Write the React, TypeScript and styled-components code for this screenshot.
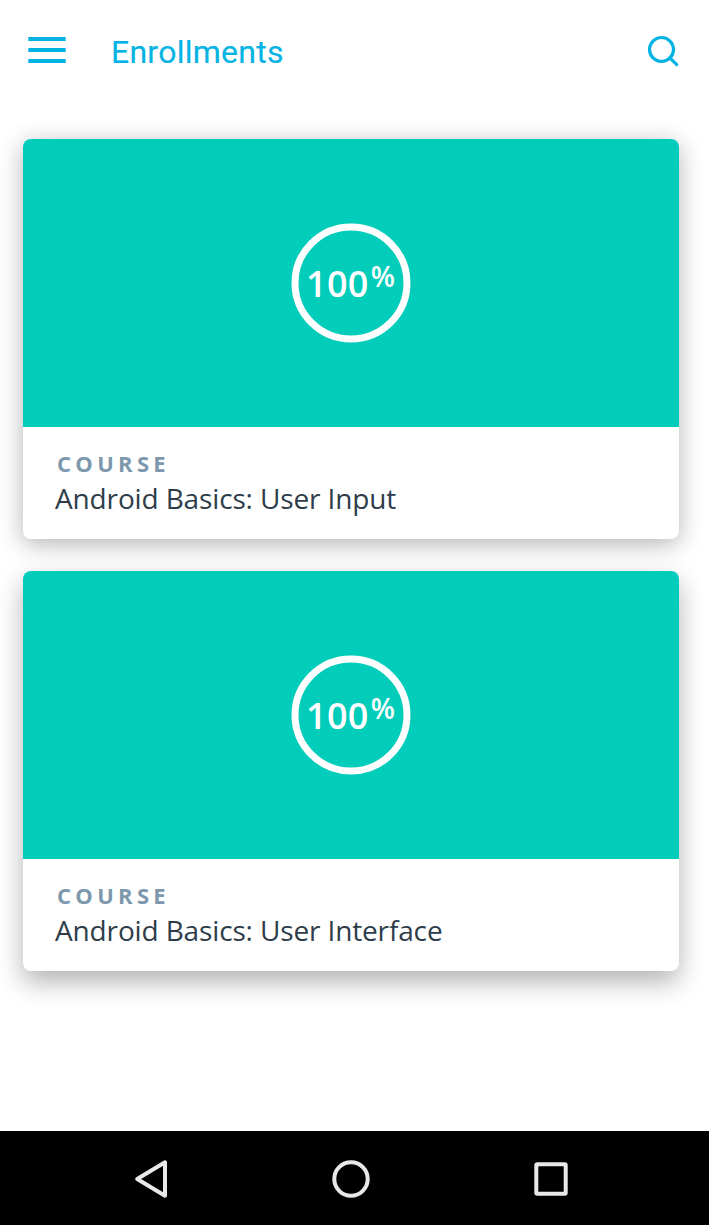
import React from 'react';
import styled, { createGlobalStyle } from 'styled-components';

const GlobalStyle = createGlobalStyle`
  * { box-sizing: border-box; }
  body { margin: 0; background: #fff; }
`;

const Screen = styled.div`
  width: 100%;
  height: 1225px;
  display: flex;
  flex-direction: column;
  overflow: hidden;
  font-family: 'Open Sans', sans-serif;
`;

const AppBar = styled.header`
  height: 104px;
  flex: none;
  display: flex;
  align-items: center;
  padding: 0 28px;
`;

const MenuIcon = styled.svg`
  width: 38px;
  height: 28px;
  margin-bottom: 4px;
`;

const Title = styled.h1`
  flex: 1;
  margin: 0 0 0 45px;
  font: 400 32px/40px Roboto, sans-serif;
  letter-spacing: 0.25px;
  color: #02b3e4;
  -webkit-text-stroke: 0.15px #02b3e4;
`;

const SearchIcon = styled.svg`
  width: 34px;
  height: 34px;
  margin-bottom: 2px;
`;

const CourseList = styled.main`
  flex: 1;
  display: flex;
  flex-direction: column;
  gap: 32px;
  padding: 35px 30px 0 23px;
`;

const Card = styled.article<{ $raised?: boolean }>`
  height: 400px;
  border-radius: 8px;
  overflow: hidden;
  background: #fff;
  box-shadow: ${({ $raised }) =>
    $raised
      ? '0 11px 26px rgba(0, 0, 0, 0.3)'
      : '0 5px 24px rgba(0, 0, 0, 0.3)'};
`;

const Banner = styled.div`
  height: 288px;
  display: flex;
  align-items: center;
  justify-content: center;
  background: #02ccba;
`;

const Progress = styled.div`
  display: grid;
  place-items: center;
  color: #fff;

  > * {
    grid-area: 1 / 1;
  }
`;

const Ring = styled.svg`
  width: 120px;
  height: 120px;
  fill: none;
  stroke: currentColor;
  stroke-width: 7;
`;

const Score = styled.div`
  display: flex;
  align-items: center;
`;

const Amount = styled.span`
  font: 600 36px/50px 'Open Sans', sans-serif;
  letter-spacing: 0.3px;
  margin: 2px 0 0 -1px;
`;

const Percent = styled.span`
  font: 600 28px/38px 'Open Sans', sans-serif;
  margin: -14px 0 0 2px;
`;

const Details = styled.div`
  padding: 21px 32px 0;
`;

const Kind = styled.div`
  padding-left: 2px;
  font: 700 22px/30px 'Open Sans', sans-serif;
  letter-spacing: 4.3px;
  color: #7d97ad;
`;

const CourseName = styled.h2`
  margin: 0;
  font: 400 28px/40px 'Open Sans', sans-serif;
  letter-spacing: -0.14px;
  color: #2e3d49;
`;

const NavBar = styled.nav`
  height: 94px;
  flex: none;
  display: flex;
  align-items: center;
  justify-content: center;
  gap: 160px;
  padding: 2px 7px 0 0;
  background: #000;
`;

const NavIcon = styled.svg`
  width: 40px;
  height: 40px;
  fill: none;
  stroke: #e9e9e9;
  stroke-width: 4;
  stroke-linejoin: round;
`;

const courses = ['Android Basics: User Input', 'Android Basics: User Interface'];

export default function App() {
  return (
    <Screen>
      <GlobalStyle />
      <AppBar>
        <MenuIcon viewBox="0 0 38 28" fill="#02b3e4">
          <path d="M.3 1h37.4v4H.3zM.3 12h37.4v4H.3zM.3 23h37.4v4H.3z" />
        </MenuIcon>
        <Title>Enrollments</Title>
        <SearchIcon viewBox="0 0 34 34" fill="none" stroke="#02b3e4" strokeWidth="3.2">
          <circle cx="14.5" cy="15.5" r="12" />
          <path d="m22.7 23.7 7 7" strokeLinecap="round" />
        </SearchIcon>
      </AppBar>
      <CourseList>
        {courses.map((name, index) => (
          <Card key={name} $raised={index === courses.length - 1}>
            <Banner>
              <Progress>
                <Ring viewBox="0 0 120 120">
                  <circle cx="60" cy="60" r="56" />
                </Ring>
                <Score>
                  <Amount>100</Amount>
                  <Percent>%</Percent>
                </Score>
              </Progress>
            </Banner>
            <Details>
              <Kind>COURSE</Kind>
              <CourseName>{name}</CourseName>
            </Details>
          </Card>
        ))}
      </CourseList>
      <NavBar>
        <NavIcon viewBox="0 0 40 40">
          <path d="M34 3.3v33.4L6.2 20Z" />
        </NavIcon>
        <NavIcon viewBox="0 0 40 40">
          <circle cx="20" cy="20" r="16.7" />
        </NavIcon>
        <NavIcon viewBox="0 0 40 40">
          <rect x="5.3" y="5.3" width="29.4" height="29.4" rx="1" />
        </NavIcon>
      </NavBar>
    </Screen>
  );
}
